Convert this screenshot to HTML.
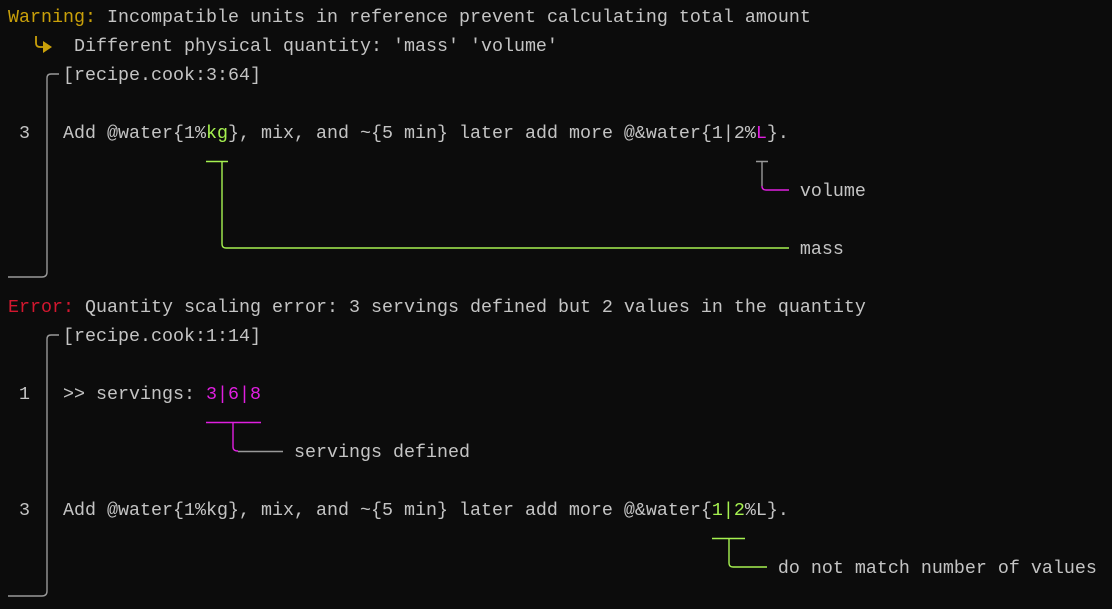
<!DOCTYPE html>
<html><head><style>
html,body{margin:0;padding:0;background:#0c0c0c;width:1112px;height:609px;overflow:hidden}
.l{position:absolute;left:8px;height:29px;line-height:29px;font-family:"Liberation Mono",monospace;font-size:18.33px;color:#c4c4c4;white-space:pre;margin-top:1px}
.y{color:#c9a00a}.g{color:#a6f250}.m{color:#e01fe0}.r{color:#d3172f}
svg{position:absolute;left:0;top:0}
</style></head><body>
<div class="l" style="top:2px"><span class="y">Warning:</span> Incompatible units in reference prevent calculating total amount</div>
<div class="l" style="top:31px">      Different physical quantity: 'mass' 'volume'</div>
<div class="l" style="top:60px">     [recipe.cook:3:64]</div>
<div class="l" style="top:118px"> 3   Add @water{1%<span class="g">kg</span>}, mix, and ~{5 min} later add more @&amp;water{1|2%<span class="m">L</span>}.</div>
<div class="l" style="top:176px">                                                                        volume</div>
<div class="l" style="top:234px">                                                                        mass</div>
<div class="l" style="top:292px"><span class="r">Error:</span> Quantity scaling error: 3 servings defined but 2 values in the quantity</div>
<div class="l" style="top:321px">     [recipe.cook:1:14]</div>
<div class="l" style="top:379px"> 1   &gt;&gt; servings: <span class="m">3|6|8</span></div>
<div class="l" style="top:437px">                          servings defined</div>
<div class="l" style="top:495px"> 3   Add @water{1%kg}, mix, and ~{5 min} later add more @&amp;water{<span class="g">1|2</span>%L}.</div>
<div class="l" style="top:553px">                                                                      do not match number of values</div>
<svg width="1112" height="609" fill="none" stroke-width="1.4">
<path d="M36 36 V43 Q36 47 40 47 H44" stroke="#c9a00a" stroke-width="1.8"/>
<path d="M43 41 L52 47 L43 53 Z" fill="#c9a00a" stroke="none"/>
<g stroke="#999">
<path d="M59 74 H51 Q47 74 47 78 V272 Q47 277 42 277 H8"/>
<path d="M59 335 H51 Q47 335 47 339 V591 Q47 596 42 596 H8"/>
<path d="M756 161.5 H768 M762 161.5 V186"/>
<path d="M238 451.5 H283"/>
</g>
<g stroke="#a6f250">
<path d="M206 161.5 H228 M222 161.5 V244 Q222 248 226 248 H789"/>
<path d="M712 538.5 H745 M729 538.5 V563 Q729 567 733 567 H767"/>
</g>
<g stroke="#e01fe0">
<path d="M762 186 Q762 190 766 190 H789"/>
<path d="M206 422.5 H261 M233 422.5 V447 Q233 451 238 451"/>
</g>
</svg>
</body></html>
